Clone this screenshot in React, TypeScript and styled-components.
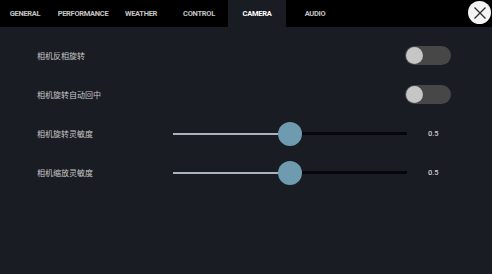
import { FC } from "react";
import styled, { createGlobalStyle } from "styled-components";

const GlobalStyle = createGlobalStyle`
  html, body {
    margin: 0;
    padding: 0;
    background: #191c22;
  }
`;

const Screen = styled.div`
  width: 492px;
  height: 274px;
  background-color: #191c22;
  display: flex;
  flex-direction: column;
  overflow: hidden;
  font-family: Roboto, "Noto Sans CJK SC", sans-serif;
`;

const TabBar = styled.div`
  height: 27px;
  flex-shrink: 0;
  display: flex;
  align-items: stretch;
  background-color: #000;
`;

const TabList = styled.div`
  display: flex;
  margin-left: -4px;
`;

const Tab = styled.div<{ $active?: boolean }>`
  width: 58px;
  display: flex;
  align-items: center;
  justify-content: center;
  background-color: ${(p) => (p.$active ? "#191c22" : "transparent")};
  color: ${(p) => (p.$active ? "#ffffff" : "#c4c4c4")};
  font-family: Roboto, sans-serif;
  font-weight: 700;
  font-size: 7.5px;
  letter-spacing: -0.3px;
`;

const CloseButton = styled.div`
  margin: 1px 1px 0 auto;
  width: 23px;
  height: 23px;
  border-radius: 50%;
  background-color: #f4f4f4;
  display: flex;
  align-items: center;
  justify-content: center;
`;

const Content = styled.div`
  padding-top: 9px;
  display: flex;
  flex-direction: column;
`;

const Row = styled.div`
  height: 39px;
  display: grid;
  grid-template-columns: 136px 1fr;
  align-items: center;
  padding-left: 37px;
  padding-right: 41px;
`;

const SliderRow = styled(Row)`
  grid-template-columns: 115px 234px 1fr;
  column-gap: 21px;
  padding-right: 0;
`;

const Label = styled.div`
  font-family: "Noto Sans CJK SC", sans-serif;
  font-size: 8px;
  color: #c9c9c9;
`;

const ToggleTrack = styled.div<{ $on?: boolean }>`
  justify-self: end;
  width: 46px;
  height: 19px;
  border-radius: 10px;
  background-color: ${(p) => (p.$on ? "#6f9bb0" : "#474747")};
  display: flex;
  align-items: center;
  justify-content: ${(p) => (p.$on ? "flex-end" : "flex-start")};
`;

const ToggleKnob = styled.div`
  width: 17px;
  height: 17px;
  margin: 0 1px;
  border-radius: 50%;
  background-color: #c6c6c6;
`;

const SliderTrack = styled.div`
  position: relative;
  height: 24px;
  display: flex;
  align-items: center;
`;

const TrackFill = styled.div`
  height: 2px;
  background-color: #a9b3bb;
`;

const TrackRest = styled.div`
  flex: 1;
  height: 3px;
  background-color: #060709;
`;

const SliderThumb = styled.div`
  position: absolute;
  top: 0;
  width: 24px;
  height: 24px;
  margin-left: -12px;
  border-radius: 50%;
  background-color: #6f9bb0;
`;

const Value = styled.div`
  font-family: Roboto, sans-serif;
  font-weight: 500;
  font-size: 7.5px;
  color: #d0d0d0;
`;

const tabs = ["GENERAL", "PERFORMANCE", "WEATHER", "CONTROL", "CAMERA", "AUDIO"];

const toggles = [
  { label: "相机反相旋转", on: false },
  { label: "相机旋转自动回中", on: false },
];

const sliders = [
  { label: "相机旋转灵敏度", value: 0.5 },
  { label: "相机缩放灵敏度", value: 0.5 },
];

const App: FC = () => {
  return (
    <Screen>
      <GlobalStyle />
      <TabBar>
        <TabList>
          {tabs.map((t) => (
            <Tab key={t} $active={t === "CAMERA"}>
              {t}
            </Tab>
          ))}
        </TabList>
        <CloseButton>
          <svg width="14" height="14" viewBox="0 0 14 14">
            <path
              d="M1.5 1.5 L12.5 12.5 M12.5 1.5 L1.5 12.5"
              stroke="#2a2a2a"
              strokeWidth="1.3"
              fill="none"
            />
          </svg>
        </CloseButton>
      </TabBar>
      <Content>
        {toggles.map((item) => (
          <Row key={item.label}>
            <Label>{item.label}</Label>
            <ToggleTrack $on={item.on}>
              <ToggleKnob />
            </ToggleTrack>
          </Row>
        ))}
        {sliders.map((item) => (
          <SliderRow key={item.label}>
            <Label>{item.label}</Label>
            <SliderTrack>
              <TrackFill style={{ width: `${item.value * 100}%` }} />
              <TrackRest />
              <SliderThumb style={{ left: `${item.value * 100}%` }} />
            </SliderTrack>
            <Value>{item.value}</Value>
          </SliderRow>
        ))}
      </Content>
    </Screen>
  );
};

export default App;
